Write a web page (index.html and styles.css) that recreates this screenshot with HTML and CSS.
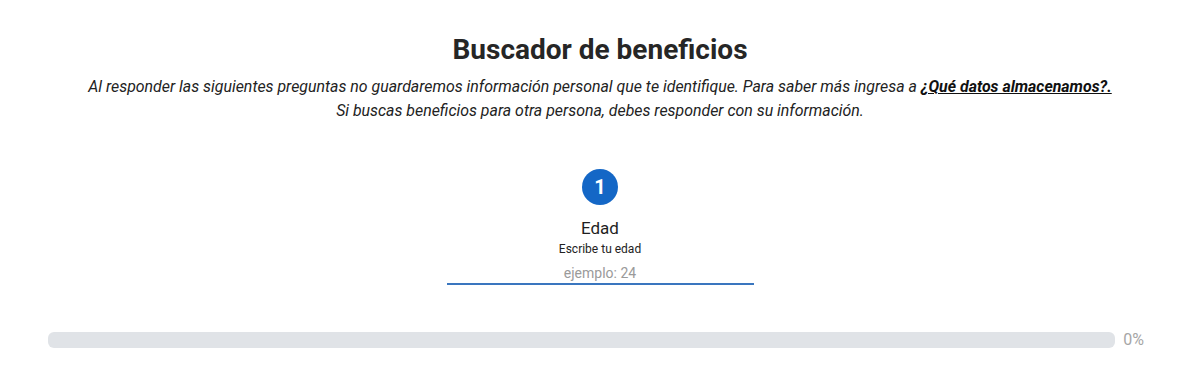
FILE: index.html
```html
<!DOCTYPE html>
<html>

<head>
    <meta http-equiv="Content-Type" content="text/html;charset=UTF-8">
    <title>Buscador de beneficios</title>
    <link rel="stylesheet" href="styles.css">
</head>

<body>
    <div class="page">
        <h1 class="title">Buscador de beneficios</h1>
        <p class="intro">Al responder las siguientes preguntas no guardaremos información personal que te identifique. Para saber más ingresa a <a href="#" class="link">¿Qué datos almacenamos?.</a><br>Si buscas beneficios para otra persona, debes responder con su información.</p>

        <div class="step">
            <div class="step-num">1</div>
            <p class="step-title">Edad</p>
            <p class="step-help">Escribe tu edad</p>
            <input class="step-input" type="text" placeholder="ejemplo: 24">
        </div>

        <div class="progress">
            <div class="progress-track">
                <div class="progress-fill" style="width: 0%;"></div>
            </div>
            <span class="progress-label">0%</span>
        </div>
    </div>
</body>

</html>
```

FILE: styles.css
```css
* {
    box-sizing: border-box;
    margin: 0;
    padding: 0;
}

body {
    width: 100vw;
    height: 100vh;
    overflow: hidden;
    background: #ffffff;
    font-family: Roboto, "Liberation Sans", sans-serif;
    color: #222222;
}

.page {
    display: flex;
    flex-direction: column;
    align-items: center;
    padding-top: 33px;
}

.title {
    font-size: 28px;
    font-weight: 700;
    line-height: 34px;
    color: #262626;
}

.intro {
    margin-top: 8px;
    font-size: 15.9px;
    font-style: italic;
    line-height: 24px;
    text-align: center;
    color: #222222;
}

.link {
    color: #111111;
    font-weight: 700;
    text-decoration: underline;
}

.step {
    display: flex;
    flex-direction: column;
    align-items: center;
    margin-top: 46px;
}

.step-num {
    width: 36px;
    height: 36px;
    border-radius: 50%;
    background: #1467c6;
    color: #ffffff;
    font-size: 20px;
    font-weight: 700;
    display: flex;
    justify-content: center;
    align-items: center;
}

.step-title {
    margin-top: 12px;
    font-size: 17px;
    font-weight: 400;
    line-height: 22px;
    color: #1f1f1f;
}

.step-help {
    margin-top: 2px;
    font-size: 12px;
    line-height: 16px;
    color: #222222;
}

.step-input {
    margin-top: 6px;
    width: 307px;
    height: 22px;
    border: none;
    border-bottom: 2px solid #3a76bf;
    outline: none;
    font-family: Roboto, "Liberation Sans", sans-serif;
    font-size: 14px;
    text-align: center;
    color: #222222;
    background: transparent;
}

.step-input::placeholder {
    color: #9a9a9a;
}

.progress {
    width: 100%;
    display: flex;
    align-items: center;
    padding: 0 56px 0 48px;
    margin-top: 45px;
    gap: 8px;
}

.progress-track {
    flex: 1;
    height: 16px;
    border-radius: 6px;
    background: #e0e3e7;
    overflow: hidden;
}

.progress-fill {
    height: 100%;
    background: #1467c6;
}

.progress-label {
    font-size: 16px;
    color: #a6a6a6;
}
```
